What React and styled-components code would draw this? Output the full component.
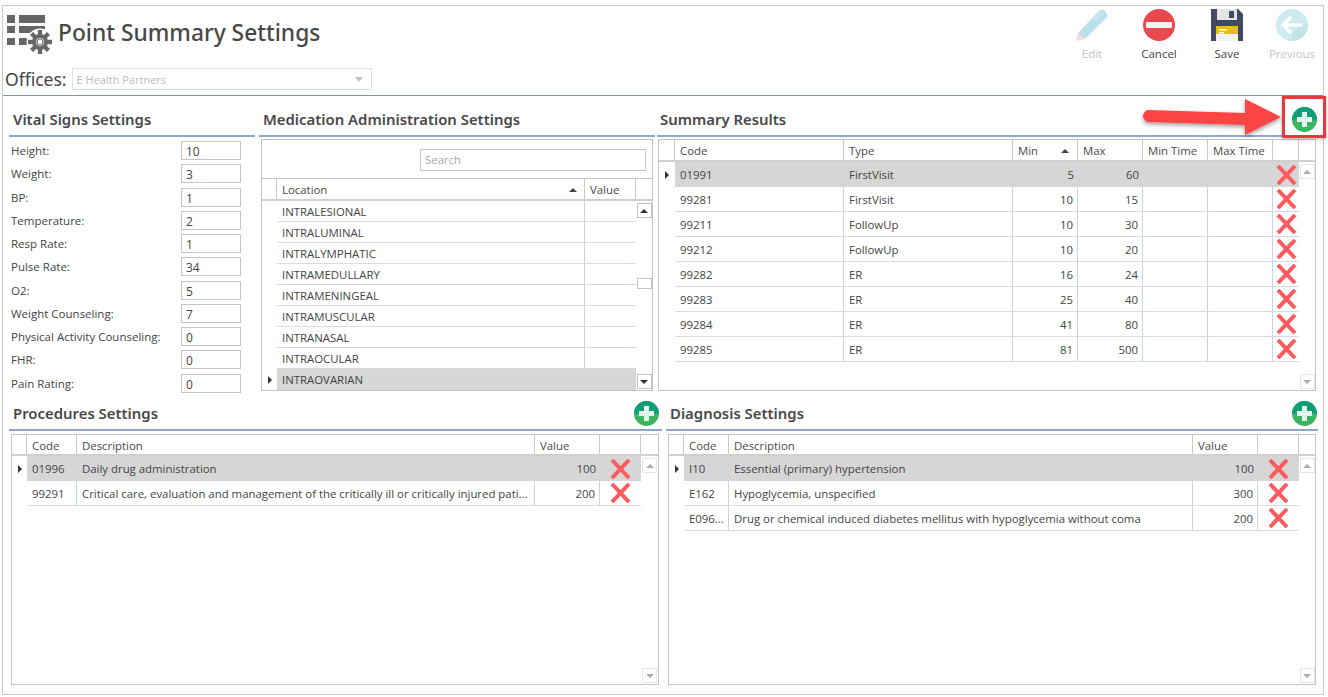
import React from 'react';
import styled, { createGlobalStyle } from 'styled-components';

const Global = createGlobalStyle`
  html, body { margin: 0; padding: 0; background: #fff; }
  body { font-family: "Open Sans", "Noto Sans", sans-serif; font-size: 11.5px; color: #444; }
  #root { padding: 5px 0 0 2px; width: 1328px; height: 697px; box-sizing: border-box; overflow: hidden; }
  * { box-sizing: border-box; }
`;

const Frame = styled.div`
  position: relative;
  width: 1322px; height: 690px;
  border: 1px solid #c8c8c8;
  display: flex; flex-direction: column;
  background: #fff;
`;
const Header = styled.header`
  height: 90px; flex: none;
  border-bottom: 1px solid #7d93b8;
  display: flex; justify-content: space-between;
`;
const HeaderLeft = styled.div`
  display: flex; flex-direction: column;
`;
const TitleRow = styled.div`
  display: flex; align-items: flex-start; gap: 5px;
  padding: 8px 0 0 4px; height: 54px;
`;
const Title = styled.h1`
  margin: 3px 0 0; font-size: 22.8px; font-weight: 500; color: #484848; line-height: 32px;
  font-family: "Noto Sans", sans-serif;
`;
const OfficeRow = styled.div`
  display: flex; align-items: center; gap: 5px;
  padding: 7px 0 0 2px;
`;
const OfficeLabel = styled.span`
  font-size: 17.5px; color: #444; font-family: "Noto Sans", sans-serif;
`;
const OfficeSelect = styled.div`
  width: 300px; height: 22px;
  border: 1px solid #e0e0e0;
  display: flex; align-items: center; justify-content: space-between;
  padding: 0 8px 0 4px;
  color: #bcbcbc; font-size: 11px;
`;
const Toolbar = styled.div`
  display: grid; grid-template-columns: 72px 62px 74px 56px;
  justify-items: center; align-items: start;
  padding: 3px 3px 0 0;
`;
const ToolButton = styled.button`
  all: unset;
  display: flex; flex-direction: column; align-items: center; gap: 5px;
  font-size: 11.5px;
  color: ${p => (p.disabled ? '#c4c4c4' : '#444')};
`;
const TopRow = styled.div`
  flex: none; height: 295px;
  display: flex;
  padding-left: 6px;
`;
const BottomRow = styled.div`
  flex: 1; min-height: 0;
  display: flex;
  padding-left: 6px;
`;
const Section = styled.section`
  flex: none;
  width: ${p => p.$width}px;
  margin-left: ${p => p.$gap || 0}px;
  display: flex; flex-direction: column; min-height: 0;
`;
const SectionHead = styled.div`
  flex: none; height: ${p => p.$height}px;
  border-bottom: 2px solid #8ea6cf;
  display: flex; align-items: center; justify-content: space-between;
  padding: ${p => p.$top}px ${p => p.$tail || 1}px 0 ${p => p.$lead || 4}px;
`;
const SectionTitle = styled.h2`
  margin: 0; font-size: 14.9px; font-weight: 600; color: #484848;
  font-family: "Noto Sans", sans-serif;
`;
const VitalsList = styled.div`
  display: flex; flex-direction: column; gap: 4.25px;
  padding: 4px 14px 0 2px;
`;
const VitalRow = styled.label`
  display: flex; align-items: center; justify-content: space-between; height: 19px;
`;
const VitalInput = styled.div`
  width: 60px; height: 19px;
  border: 1px solid #c4c4c4;
  padding: 1px 4px 0;
  font-size: 12px; line-height: 17px; color: #444;
`;

const GridBox = styled.div`
  margin: ${p => p.$margin};
  height: ${p => p.$height}px;
  width: ${p => p.$width}px;
  border: 1px solid #c4c4c4;
  display: flex; flex-direction: column;
  flex: none;
  font-size: 11.4px;
`;
const SearchBar = styled.div`
  flex: none; height: 39px;
  border-bottom: 1px solid #c4c4c4;
  display: flex; align-items: center; justify-content: flex-end;
  padding: 2px 6px 0 0;
`;
const SearchBox = styled.div`
  width: 226px; height: 22px;
  border: 1px solid #c4c4c4;
  padding-left: 4px;
  color: #a8a8a8; line-height: 20px;
`;
const HeadRow = styled.div`
  flex: none; height: ${p => p.$height}px;
  display: grid; grid-template-columns: ${p => p.$cols};
  border-bottom: 2px solid #d0d0d0;
`;
const HeadCell = styled.div`
  border-right: 1px solid #c8c8c8;
  padding: 1px 0 0 5px;
  display: flex; align-items: center; justify-content: space-between;
  color: #484848;
  &:last-child { border-right: 0; }
`;
const SortMark = styled.span`
  width: 0; height: 0; margin-right: ${p => p.$gap || 10}px;
  border-left: 4px solid transparent; border-right: 4px solid transparent;
  border-bottom: 4px solid #444;
`;
const GridBody = styled.div`
  flex: 1; min-height: 0;
  display: flex; justify-content: space-between;
`;
const RowList = styled.div`
  flex: none;
  width: ${p => p.$width}px;
  display: flex; flex-direction: column;
`;
const DataRow = styled.div`
  flex: none; height: ${p => p.$height}px;
  display: grid; grid-template-columns: ${p => p.$cols};
`;
const Indicator = styled.div`
  display: flex; align-items: center; justify-content: center;
  &::after {
    content: ${p => (p.$on ? '""' : 'none')};
    width: 0; height: 0;
    border-top: 4px solid transparent; border-bottom: 4px solid transparent;
    border-left: 4px solid #333;
  }
`;
const Cell = styled.div`
  background: ${p => (p.$selected ? '#d6d6d6' : '#fff')};
  border-right: ${p => (p.$selected ? '0' : '1px solid #c9d4e2')};
  border-bottom: ${p => (p.$selected ? '0' : '1px solid #d5dce6')};
  display: flex; align-items: center;
  justify-content: ${p => (p.$right ? 'flex-end' : p.$center ? 'center' : 'flex-start')};
  padding: ${p => (p.$center ? '0' : '0 4px 0 5px')};
  white-space: nowrap; overflow: hidden; color: #444;
  &:first-of-type { box-shadow: ${p => (p.$selected ? 'none' : 'inset 1px 0 0 #c9d4e2')}; }
  &:last-child { border-right: 0; }
`;
const ScrollColumn = styled.div`
  width: ${p => p.$width}px; flex: none;
  display: flex; flex-direction: column; justify-content: space-between; align-items: center;
  padding: 2px 0 1px;
`;
const ScrollButton = styled.div`
  width: 15px; height: 15px;
  border: 1px solid ${p => (p.$active ? '#c4c4c4' : '#e6e6e6')};
  display: flex; align-items: center; justify-content: center;
  &::after {
    content: '';
    width: 0; height: 0;
    border-left: 4px solid transparent; border-right: 4px solid transparent;
    ${p => (p.$down ? 'border-top' : 'border-bottom')}: 4px solid ${p => (p.$active ? '#333' : '#aaa')};
  }
`;
const ScrollThumb = styled.div`
  width: 15px; height: 11px; border: 1px solid #c4c4c4; margin-bottom: 26px;
`;
const RedBox = styled.div`
  position: absolute; left: 1279px; top: 90px;
  width: 44px; height: 42px;
  border: 3px solid #e8383d;
  box-shadow: 0 1px 3px rgba(0,0,0,.3);
  pointer-events: none;
`;
const ArrowLayer = styled.svg`
  position: absolute; left: 1135px; top: 90px;
  pointer-events: none;
`;

const GridIcon = () => (
  <svg width="46" height="41" viewBox="0 0 46 41">
    <g fill="#666">
      <rect x="0" y="1" width="8" height="8" />
      <rect x="12" y="1" width="26" height="8" />
      <rect x="0" y="12" width="8" height="7" />
      <rect x="12" y="12" width="26" height="7" />
      <rect x="0" y="24" width="8" height="7" />
      <rect x="12" y="24" width="10" height="7" />
      <g transform="translate(33 28)">
        <circle r="13.5" fill="#fff" />
        {[0, 45, 90, 135, 180, 225, 270, 315].map(a => (
          <rect key={a} x="-2.2" y="-12" width="4.4" height="5" transform={`rotate(${a})`} />
        ))}
        <circle r="5.5" fill="none" stroke="#666" strokeWidth="5" />
        <circle r="4" fill="#fff" />
        <circle r="3" fill="none" stroke="#666" strokeWidth="1.2" />
      </g>
    </g>
  </svg>
);
const PencilIcon = () => (
  <svg width="33" height="32" viewBox="0 0 33 32">
    <path d="M2 24 L24 1 Q26 0 28 1 L31 5 Q32 7 31 8 L9 30 Z" fill="#bcdfee" />
    <path d="M2 24 L9 30 L0 32 Z" fill="#f6dcd6" />
    <path d="M16 9 L24 1 L28 4 L20 13 Z" fill="#c9e6f2" />
  </svg>
);
const CancelIcon = () => (
  <svg width="32" height="32" viewBox="0 0 32 32">
    <circle cx="16" cy="16" r="16" fill="#e9484f" />
    <rect x="3" y="13" width="26" height="6" rx="1" fill="#f3f3f3" />
  </svg>
);
const SaveIcon = () => (
  <svg width="32" height="32" viewBox="0 0 32 32">
    <path d="M0 0 H27 L32 5 V32 H0 Z" fill="#414a63" />
    <rect x="6" y="0" width="20" height="11" fill="#e4e4e4" />
    <rect x="18" y="2" width="5" height="7" fill="#414a63" />
    <rect x="5" y="17" width="22" height="15" fill="#f2f2f2" />
    <rect x="5" y="17" width="22" height="8" fill="#ecb91f" />
    <rect x="8" y="20" width="8" height="1.5" fill="#fff" />
    <rect x="8" y="23" width="5" height="1.5" fill="#fff" />
  </svg>
);
const PrevIcon = () => (
  <svg width="32" height="32" viewBox="0 0 32 32">
    <circle cx="16" cy="16" r="16" fill="#cdebf0" />
    <path d="M16 32 A16 16 0 0 0 32 16 L26 16 L16 24 Z" fill="#c2e4e6" />
    <path d="M15 8 L7 16 L15 24 M8 16 H26" fill="none" stroke="#fff" strokeWidth="3.6" />
  </svg>
);
const PlusIcon = () => (
  <svg width="25" height="25" viewBox="0 0 25 25">
    <defs>
      <clipPath id="plus-top"><rect width="25" height="12.5" /></clipPath>
    </defs>
    <circle cx="12.5" cy="12.5" r="12.5" fill="#3db462" />
    <circle cx="12.5" cy="12.5" r="12.5" fill="#0f9e78" clipPath="url(#plus-top)" />
    <path d="M10 5 H15 V10 H20 V15 H15 V20 H10 V15 H5 V10 H10 Z" fill="#e4f4ec" />
  </svg>
);
const DeleteIcon = () => (
  <svg width="21" height="20" viewBox="0 0 21 20">
    <path d="M2 1 L19 19 M19 1 L2 19" stroke="#fb5a5e" strokeWidth="4" fill="none" />
  </svg>
);
const CaretDown = () => (
  <svg width="8" height="5" viewBox="0 0 8 5"><path d="M0 0 H8 L4 5 Z" fill="#c0c0c0" /></svg>
);

const DataGrid = ({ head, cols, headCols, rows, rowHeight, scrollWidth, activeScroll, thumb, bodyWidth }) => (
  <>
    <HeadRow $cols={headCols} $height={head.height}>
      <HeadCell />
      {head.cells.map((c, i) => (
        <HeadCell key={i}>
          {c.label}
          {c.sort && <SortMark $gap={c.sort} />}
        </HeadCell>
      ))}
      <HeadCell />
    </HeadRow>
    <GridBody>
      <RowList $width={bodyWidth}>
        {rows.map((r, i) => (
          <DataRow key={i} $cols={cols} $height={rowHeight}>
            <Indicator $on={r.selected} />
            {r.cells.map((c, j) => (
              <Cell key={j} $selected={r.selected} $right={head.cells[j].right} $center={c === 'x'}>
                {c === 'x' ? <DeleteIcon /> : c}
              </Cell>
            ))}
          </DataRow>
        ))}
      </RowList>
      <ScrollColumn $width={scrollWidth}>
        <ScrollButton $active={activeScroll} />
        {thumb && <ScrollThumb />}
        <ScrollButton $active={activeScroll} $down />
      </ScrollColumn>
    </GridBody>
  </>
);

const vitals = [
  ['Height:', '10'], ['Weight:', '3'], ['BP:', '1'], ['Temperature:', '2'], ['Resp Rate:', '1'],
  ['Pulse Rate:', '34'], ['O2:', '5'], ['Weight Counseling:', '7'],
  ['Physical Activity Counseling:', '0'], ['FHR:', '0'], ['Pain Rating:', '0'],
];
const locations = ['INTRALESIONAL', 'INTRALUMINAL', 'INTRALYMPHATIC', 'INTRAMEDULLARY', 'INTRAMENINGEAL',
  'INTRAMUSCULAR', 'INTRANASAL', 'INTRAOCULAR', 'INTRAOVARIAN'];
const summary = [
  ['01991', 'FirstVisit', '5', '60'], ['99281', 'FirstVisit', '10', '15'], ['99211', 'FollowUp', '10', '30'],
  ['99212', 'FollowUp', '10', '20'], ['99282', 'ER', '16', '24'], ['99283', 'ER', '25', '40'],
  ['99284', 'ER', '41', '80'], ['99285', 'ER', '81', '500'],
];
const settingHead = {
  height: 21,
  cells: [{ label: 'Code' }, { label: 'Description' }, { label: 'Value', right: true }, { label: '' }],
};

export default function App() {
  return (
    <Frame>
      <Global />
      <Header>
        <HeaderLeft>
          <TitleRow>
            <GridIcon />
            <Title>Point Summary Settings</Title>
          </TitleRow>
          <OfficeRow>
            <OfficeLabel>Offices:</OfficeLabel>
            <OfficeSelect>E Health Partners<CaretDown /></OfficeSelect>
          </OfficeRow>
        </HeaderLeft>
        <Toolbar>
          <ToolButton disabled><PencilIcon />Edit</ToolButton>
          <ToolButton><CancelIcon />Cancel</ToolButton>
          <ToolButton><SaveIcon />Save</ToolButton>
          <ToolButton disabled><PrevIcon />Previous</ToolButton>
        </Toolbar>
      </Header>
      <TopRow>
        <Section $width={246}>
          <SectionHead $height={41} $top={7}><SectionTitle>Vital Signs Settings</SectionTitle></SectionHead>
          <VitalsList>
            {vitals.map(([l, v]) => (
              <VitalRow key={l}>{l}<VitalInput>{v}</VitalInput></VitalRow>
            ))}
          </VitalsList>
        </Section>
        <Section $width={396} $gap={4}>
          <SectionHead $height={41} $top={7}><SectionTitle>Medication Administration Settings</SectionTitle></SectionHead>
          <GridBox $margin="2px 0 0 2px" $width={392} $height={252}>
            <SearchBar><SearchBox>Search</SearchBox></SearchBar>
            <DataGrid
              head={{ height: 22, cells: [{ label: 'Location', sort: 7 }, { label: 'Value' }] }}
              headCols="15px 308px 51px 1fr"
              cols="15px 308px 51px"
              bodyWidth={374}
              rowHeight={21}
              scrollWidth={16}
              activeScroll
              thumb
              rows={locations.map((l, i) => ({ selected: i === 8, cells: [l, ''] }))}
            />
          </GridBox>
        </Section>
        <Section $width={661} $gap={2}>
          <SectionHead $height={41} $top={7} $lead={3}>
            <SectionTitle>Summary Results</SectionTitle>
            <PlusIcon />
          </SectionHead>
          <GridBox $margin="2px 0 0 1px" $width={658} $height={252}>
            <DataGrid
              head={{ height: 22, cells: [
                { label: 'Code' }, { label: 'Type' }, { label: 'Min', sort: 8, right: true }, { label: 'Max', right: true },
                { label: 'Min Time' }, { label: 'Max Time' }, { label: '' },
              ] }}
              headCols="16px 169px 169px 65px 65px 65px 65px 26px 1fr"
              cols="16px 169px 169px 65px 65px 65px 65px 26px"
              bodyWidth={640}
              rowHeight={25}
              scrollWidth={16}
              rows={summary.map((r, i) => ({ selected: i === 0, cells: [...r, '', '', 'x'] }))}
            />
          </GridBox>
        </Section>
      </TopRow>
      <BottomRow>
        <Section $width={653}>
          <SectionHead $height={40} $top={6} $tail={3}>
            <SectionTitle>Procedures Settings</SectionTitle>
            <PlusIcon />
          </SectionHead>
          <GridBox $margin="3px 0 0 2px" $width={648} $height={251}>
            <DataGrid
              head={settingHead}
              headCols="15px 50px 458px 65px 41px 1fr"
              cols="15px 50px 458px 65px 41px"
              bodyWidth={629}
              rowHeight={25}
              scrollWidth={17}
              rows={[
                { selected: true, cells: ['01996', 'Daily drug administration', '100', 'x'] },
                { cells: ['99291', 'Critical care, evaluation and management of the critically ill or critically injured pati...', '200', 'x'] },
              ]}
            />
          </GridBox>
        </Section>
        <Section $width={652} $gap={4}>
          <SectionHead $height={40} $top={6}>
            <SectionTitle>Diagnosis Settings</SectionTitle>
            <PlusIcon />
          </SectionHead>
          <GridBox $margin="3px 0 0 2px" $width={648} $height={251}>
            <DataGrid
              head={settingHead}
              headCols="15px 45px 464px 65px 41px 1fr"
              cols="15px 45px 464px 65px 41px"
              bodyWidth={630}
              rowHeight={25}
              scrollWidth={16}
              rows={[
                { selected: true, cells: ['I10', 'Essential (primary) hypertension', '100', 'x'] },
                { cells: ['E162', 'Hypoglycemia, unspecified', '300', 'x'] },
                { cells: ['E096...', 'Drug or chemical induced diabetes mellitus with hypoglycemia without coma', '200', 'x'] },
              ]}
            />
          </GridBox>
        </Section>
      </BottomRow>
      <RedBox />
      <ArrowLayer width="150" height="50" viewBox="0 0 150 50">
        <defs>
          <filter id="arrow-shadow" x="-10%" y="-20%" width="120%" height="150%">
            <feDropShadow dx="0" dy="2" stdDeviation="2" floodColor="#000" floodOpacity="0.4" />
          </filter>
        </defs>
        <path
          d="M9 14 L107 17 L107 3 L143 21 L107 39 L107 29 L9 26 Q1 20 9 14 Z"
          fill="#fb4444"
          filter="url(#arrow-shadow)"
        />
      </ArrowLayer>
    </Frame>
  );
}
